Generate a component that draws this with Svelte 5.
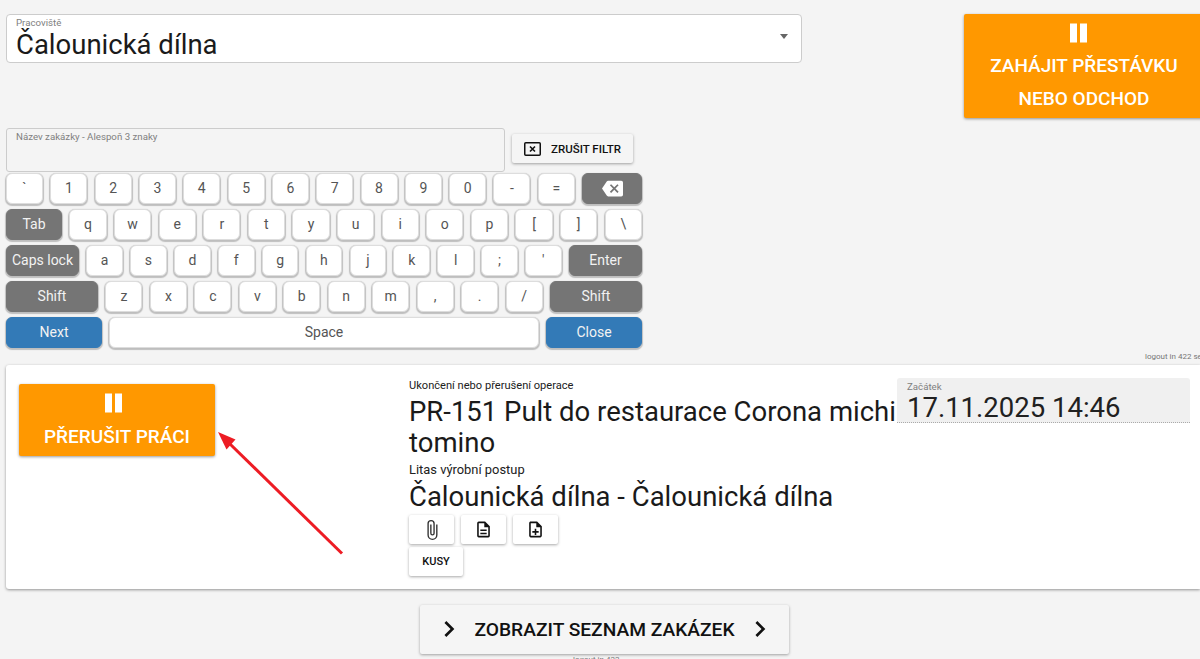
<script>
	const digits = ['`', '1', '2', '3', '4', '5', '6', '7', '8', '9', '0', '-', '='];
	const row2 = ['q', 'w', 'e', 'r', 't', 'y', 'u', 'i', 'o', 'p', '[', ']', '\\'];
	const row3 = ['a', 's', 'd', 'f', 'g', 'h', 'j', 'k', 'l', ';', "'"];
	const row4 = ['z', 'x', 'c', 'v', 'b', 'n', 'm', ',', '.', '/'];
</script>

{#snippet pause()}
	<svg class="pause" viewBox="0 0 17 20" width="17" height="20" aria-hidden="true">
		<rect x="0" y="0.5" width="7" height="19" fill="#fff" />
		<rect x="10" y="0.5" width="7" height="19" fill="#fff" />
	</svg>
{/snippet}

{#snippet chevron()}
	<svg viewBox="0 0 24 24" width="32" height="32" aria-hidden="true">
		<path d="M8.59 16.59L13.17 12 8.59 7.41 10 6l6 6-6 6-1.41-1.41z" fill="#111" />
	</svg>
{/snippet}

<div class="page">
	<div class="top">
		<div class="select">
			<span class="label">Pracoviště</span>
			<span class="select-value">Čalounická dílna</span>
			<span class="caret"></span>
		</div>
		<button class="orange break-btn">
			{@render pause()}
			<span>ZAHÁJIT PŘESTÁVKU</span>
			<span>NEBO ODCHOD</span>
		</button>
	</div>

	<div class="filter">
		<div class="filter-input"><span class="label">Název zakázky - Alespoň 3 znaky</span></div>
		<button class="flat clear-btn">
			<svg viewBox="0 0 17 14" width="17" height="14" aria-hidden="true">
				<rect x="0.75" y="0.75" width="15.5" height="12.5" rx="1" fill="none" stroke="#111" stroke-width="1.5" />
				<path d="M6 4.5l5 5M11 4.5l-5 5" stroke="#111" stroke-width="1.6" fill="none" />
			</svg>
			ZRUŠIT FILTR
		</button>
	</div>

	<div class="keyboard">
		<div class="row">
			{#each digits as k}<div class="key">{k}</div>{/each}
			<div class="key dark backspace">
				<svg viewBox="0 0 24 24" width="21" height="21" aria-hidden="true">
					<path fill="#fff" d="M22,3H7C6.31,3 5.77,3.35 5.41,3.88L0,12L5.41,20.11C5.77,20.64 6.31,21 7,21H22A2,2 0 0,0 24,19V5A2,2 0 0,0 22,3M19,15.59L17.59,17L14,13.41L10.41,17L9,15.59L12.59,12L9,8.41L10.41,7L14,10.59L17.59,7L19,8.41L15.41,12L19,15.59Z" />
				</svg>
			</div>
		</div>
		<div class="row">
			<div class="key dark tab">Tab</div>
			{#each row2 as k}<div class="key">{k}</div>{/each}
		</div>
		<div class="row">
			<div class="key dark caps">Caps lock</div>
			{#each row3 as k}<div class="key">{k}</div>{/each}
			<div class="key dark caps">Enter</div>
		</div>
		<div class="row">
			<div class="key dark shift">Shift</div>
			{#each row4 as k}<div class="key">{k}</div>{/each}
			<div class="key dark shift">Shift</div>
		</div>
		<div class="row">
			<div class="key blue wide">Next</div>
			<div class="key">Space</div>
			<div class="key blue wide">Close</div>
		</div>
	</div>

	<div class="logout">logout in 422 sec</div>

	<div class="card">
		<div class="card-left">
			<button class="orange stop-btn">
				{@render pause()}
				<span>PŘERUŠIT PRÁCI</span>
			</button>
		</div>
		<div class="card-mid">
			<div class="caption">Ukončení nebo přerušení operace</div>
			<div class="big first">PR-151 Pult do restaurace Corona michi tomino</div>
			<div class="caption second">Litas výrobní postup</div>
			<div class="big last">Čalounická dílna - Čalounická dílna</div>
			<div class="tools">
				<button class="flat tool">
					<svg viewBox="0 0 24 24" width="22" height="22" aria-hidden="true"><path fill="#333" d="M16.5,6V17.5A4,4 0 0,1 12.5,21.5A4,4 0 0,1 8.5,17.5V5A2.5,2.5 0 0,1 11,2.5A2.5,2.5 0 0,1 13.5,5V15.5A1,1 0 0,1 12.5,16.5A1,1 0 0,1 11.5,15.5V6H10V15.5A2.5,2.5 0 0,0 12.5,18A2.5,2.5 0 0,0 15,15.5V5A4,4 0 0,0 11,1A4,4 0 0,0 7,5V17.5A5.5,5.5 0 0,0 12.5,23A5.5,5.5 0 0,0 18,17.5V6H16.5Z" /></svg>
				</button>
				<button class="flat tool">
					<svg viewBox="0 0 24 24" width="19" height="19" aria-hidden="true"><path fill="#111" d="M6,2A2,2 0 0,0 4,4V20A2,2 0 0,0 6,22H18A2,2 0 0,0 20,20V8L14,2H6M6,4H13V9H18V20H6V4M8,12V14H16V12H8M8,16V18H16V16H8Z" /></svg>
				</button>
				<button class="flat tool">
					<svg viewBox="0 0 24 24" width="19" height="19" aria-hidden="true"><path fill="#111" d="M14 2H6C4.9 2 4 2.9 4 4V20C4 21.1 4.9 22 6 22H18C19.1 22 20 21.1 20 20V8L14 2M18 20H6V4H13V9H18V20M11 11V14H8V16H11V19H13V16H16V14H13V11H11Z" /></svg>
				</button>
			</div>
			<button class="flat pieces">KUSY</button>
		</div>
		<div class="start">
			<span class="label">Začátek</span>
			<span class="start-value">17.11.2025 14:46</span>
		</div>
		<svg class="arrow" viewBox="0 0 140 140" width="140" height="140" aria-hidden="true">
			<path d="M124 121.5L12 12" stroke="#ed1c24" stroke-width="3" fill="none" />
			<path d="M0 0L17.5 7.5L8.5 17.5Z" fill="#ed1c24" />
		</svg>
	</div>

	<div class="bottom">
		<button class="flat list-btn">
			{@render chevron()}
			<span>ZOBRAZIT SEZNAM ZAKÁZEK</span>
			{@render chevron()}
		</button>
	</div>
	<div class="logout-bottom">logout in 422</div>
</div>

<style>
	:global(body) {
		margin: 0;
		background: #f4f4f4;
	}

	.page {
		height: 659px;
		overflow: hidden;
		padding: 14px 0 0 6px;
		box-sizing: border-box;
		font-family: Roboto, sans-serif;
		color: #212121;
	}

	button {
		font-family: inherit;
		border: none;
		cursor: pointer;
		padding: 0;
	}

	.top {
		display: flex;
		justify-content: space-between;
		align-items: flex-start;
	}

	.label {
		font-size: 9.7px;
		line-height: 12px;
		color: #808080;
	}

	.select {
		position: relative;
		width: 795.5px;
		height: 48.5px;
		box-sizing: border-box;
		padding: 2px 9px 0;
		background: #fff;
		border: 1px solid #ccc;
		border-radius: 4px;
		display: flex;
		flex-direction: column;
	}

	.select-value {
		font-size: 27.5px;
		line-height: 31px;
		color: #1a1a1a;
	}

	.caret {
		position: absolute;
		right: 13px;
		top: 19px;
		border-left: 4.5px solid transparent;
		border-right: 4.5px solid transparent;
		border-top: 5px solid #666;
	}

	.orange {
		background: #ff9800;
		color: #fff;
		font-weight: 500;
		font-size: 19px;
		border-radius: 2px;
		box-shadow: 0 1px 3px rgba(0, 0, 0, 0.4);
		display: flex;
		flex-direction: column;
		align-items: center;
	}

	.pause {
		display: block;
		margin-right: 8px;
	}

	.break-btn {
		width: 240px;
		height: 104px;
		margin-right: -4px;
		padding-top: 9px;
		flex-shrink: 0;
	}

	.break-btn .pause {
		margin-right: 12px;
	}

	.break-btn span {
		line-height: 33px;
	}

	.break-btn .pause + span {
		margin-top: 6px;
	}

	.flat {
		background: #f5f5f5;
		color: #111;
		border-radius: 2px;
		box-shadow: 0 1px 3px rgba(0, 0, 0, 0.35);
		font-weight: 500;
	}

	.filter {
		display: flex;
		align-items: flex-start;
		gap: 7px;
		margin-top: 10px;
	}

	.filter-input {
		width: 499px;
		height: 44px;
		box-sizing: border-box;
		padding: 2px 9px;
		border: 1px solid #ccc;
		border-radius: 3px;
		display: flex;
	}

	.clear-btn {
		width: 121px;
		height: 29px;
		margin-top: 6px;
		display: flex;
		align-items: center;
		justify-content: center;
		gap: 10px;
		font-size: 11.5px;
	}

	.keyboard {
		width: 636px;
		margin-top: 1px;
		display: flex;
		flex-direction: column;
		gap: 5.5px;
	}

	.row {
		display: flex;
		gap: 7.3px;
		height: 30.5px;
	}

	.key {
		flex: 1 1 0;
		min-width: 0;
		box-sizing: border-box;
		background: #fff;
		border: 1px solid #ddd;
		border-radius: 6px;
		box-shadow: 0 1px 1px 1px rgba(0, 0, 0, 0.22);
		display: flex;
		align-items: center;
		justify-content: center;
		font-size: 14px;
		color: #555;
	}

	.dark {
		background: #757575;
		border-color: #757575;
		color: #f2f2f2;
	}

	.blue {
		background: #337ab7;
		border-color: #337ab7;
		color: #f2f2f2;
	}

	.backspace {
		flex: 0 0 60px;
	}

	.tab {
		flex: 0 0 56px;
	}

	.caps {
		flex: 0 0 73px;
	}

	.shift {
		flex: 0 0 92px;
	}

	.wide {
		flex: 0 0 96px;
	}

	.logout {
		font-size: 8px;
		line-height: 10px;
		color: #777;
		white-space: nowrap;
		margin: 4px 0 3px 1139px;
	}

	.card {
		position: relative;
		height: 224px;
		background: #fff;
		border-radius: 3px 0 0 3px;
		box-shadow: 0 1px 3px rgba(0, 0, 0, 0.4);
		display: flex;
	}

	.card-left {
		width: 403px;
		flex-shrink: 0;
		padding: 19px 0 0 13px;
		box-sizing: border-box;
	}

	.stop-btn {
		width: 196px;
		height: 72px;
		padding-top: 9px;
	}

	.stop-btn span {
		margin-top: 12px;
		line-height: 24px;
	}

	.card-mid {
		width: 488px;
		flex-shrink: 0;
		padding-top: 14px;
	}

	.caption {
		font-size: 11.1px;
		line-height: 14px;
		color: #212121;
	}

	.second {
		font-size: 12.9px;
		margin-top: 4px;
	}

	.big {
		font-size: 27.5px;
		line-height: 31.5px;
		color: #1a1a1a;
	}

	.first {
		margin-top: 3px;
	}

	.last {
		margin-top: 4px;
	}

	.tools {
		display: flex;
		gap: 7px;
		margin-top: 3px;
	}

	.tool {
		width: 45px;
		height: 29px;
		display: flex;
		align-items: center;
		justify-content: center;
		background: #fff;
	}

	.pieces {
		display: block;
		margin-top: 3px;
		width: 54px;
		height: 29px;
		background: #fff;
		font-size: 11px;
	}

	.start {
		width: 293px;
		height: 45px;
		margin-top: 13px;
		box-sizing: border-box;
		background: #f0f0f0;
		border-bottom: 1px dotted #aaa;
		border-radius: 3px 3px 0 0;
		padding: 3px 10px 0;
		display: flex;
		flex-direction: column;
	}

	.start-value {
		font-size: 27.5px;
		line-height: 30px;
		color: #212121;
	}

	.arrow {
		position: absolute;
		left: 212px;
		top: 67px;
	}

	.bottom {
		display: flex;
		margin: 16px 0 0 414px;
	}

	.list-btn {
		width: 369px;
		height: 49px;
		display: flex;
		align-items: center;
		justify-content: center;
		gap: 9px;
		font-size: 19.2px;
	}

	.logout-bottom {
		margin: 1px 0 0 567px;
		font-size: 8px;
		line-height: 10px;
		color: #777;
	}
</style>
